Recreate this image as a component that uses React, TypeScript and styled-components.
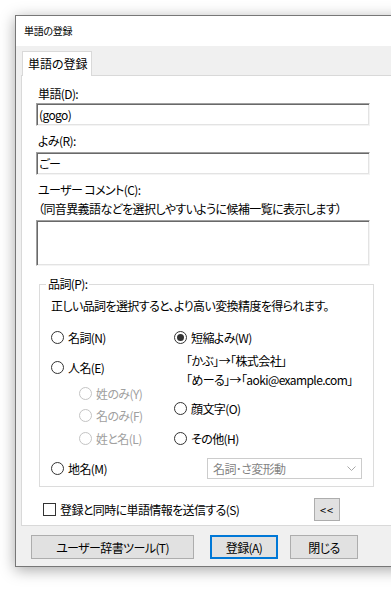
import styled, { createGlobalStyle } from "styled-components"

const GlobalStyle = createGlobalStyle`
  html, body {
    margin: 0;
    padding: 0;
    background: #fff;
    overflow: hidden;
  }
  body {
    font-family: "Noto Sans CJK JP", "Noto Sans", sans-serif;
    font-size: 12px;
    color: #000;
    font-feature-settings: "palt";
    letter-spacing: -0.6px;
  }
  * {
    box-sizing: border-box;
  }
`

const Screen = styled.div`
  width: 391px;
  height: 589px;
  padding: 15px 0 0 15px;
  overflow: hidden;
`

const Window = styled.div`
  width: 400px;
  height: 552px;
  border: 1px solid #777;
  border-right: none;
  background: #f0f0f0;
  box-shadow: 0 3px 14px rgba(0, 0, 0, 0.35);
  display: flex;
  flex-direction: column;
`

const TitleBar = styled.div`
  height: 30px;
  background: #fff;
  padding-left: 8px;
  display: flex;
  align-items: center;
  font-size: 10px;
  line-height: 12px;
  letter-spacing: -0.3px;
`

const Body = styled.div`
  padding-top: 5px;
  display: flex;
  flex-direction: column;
`

const TabStrip = styled.div`
  display: flex;
  padding-left: 6px;
`

const Tab = styled.div`
  position: relative;
  z-index: 1;
  width: 70px;
  height: 25px;
  margin-bottom: -1px;
  padding: 0 5px;
  border: 1px solid #d9d9d9;
  border-bottom: none;
  background: #fff;
  display: flex;
  align-items: center;
  line-height: 16px;
  white-space: nowrap;
  letter-spacing: 0;
`

const TabPage = styled.div`
  height: 451px;
  margin-left: 5px;
  padding: 10px 0 0 14px;
  border: 1px solid #d9d9d9;
  background: #fff;
  display: flex;
  flex-direction: column;
`

const Label = styled.div<{ $mt?: number }>`
  margin-top: ${(p) => p.$mt ?? 0}px;
  padding-left: 2px;
  line-height: 16px;
  white-space: nowrap;
`

const TextBox = styled.div<{ $h?: number; $mt?: number }>`
  width: 334px;
  height: ${(p) => p.$h ?? 23}px;
  margin-top: ${(p) => p.$mt ?? 0}px;
  padding: 2px 2px;
  border: 1px solid;
  border-color: #a0a0a0 #f4f4f4 #f4f4f4 #a0a0a0;
  box-shadow: inset 1px 1px 0 #696969, inset -1px -1px 0 #e3e3e3;
  background: #fff;
  line-height: 17px;
`

const Group = styled.fieldset`
  width: 335px;
  margin: 10px 0 0 3px;
  padding: 5px 11px 7px 11px;
  border: 1px solid #dcdcdc;
  min-width: 0;
`

const Legend = styled.legend`
  margin-left: -5px;
  padding: 0 2px;
  line-height: 16px;
`

const Note = styled.div<{ $mt?: number; $pl?: number }>`
  margin-top: ${(p) => p.$mt ?? 0}px;
  padding-left: ${(p) => p.$pl ?? 0}px;
  line-height: 18px;
  white-space: nowrap;
`

const Columns = styled.div`
  display: flex;
  margin-top: 12px;
`

const Column = styled.div<{ $w?: number }>`
  display: flex;
  flex-direction: column;
  width: ${(p) => (p.$w ? `${p.$w}px` : "auto")};
`

const Option = styled.div<{ $mt?: number; $indent?: number; $disabled?: boolean }>`
  display: flex;
  align-items: center;
  gap: 4px;
  height: 20px;
  margin-top: ${(p) => p.$mt ?? 0}px;
  padding-left: ${(p) => p.$indent ?? 0}px;
  color: ${(p) => (p.$disabled ? "#a0a0a0" : "#000")};
  white-space: nowrap;
`

const RadioMark = styled.span<{ $checked?: boolean; $disabled?: boolean }>`
  position: relative;
  width: 13px;
  height: 13px;
  flex: none;
  border-radius: 50%;
  border: 1px solid ${(p) => (p.$disabled ? "#c4c4c4" : "#333")};
  background: #fff;

  &::after {
    content: "";
    display: ${(p) => (p.$checked ? "block" : "none")};
    position: absolute;
    left: 2px;
    top: 2px;
    width: 7px;
    height: 7px;
    border-radius: 50%;
    background: #333;
  }
`

const Combo = styled.div`
  width: 155px;
  height: 21px;
  margin: 10px 0 0 33px;
  padding: 0 5px 0 5px;
  border: 1px solid #cccccc;
  background: #fff;
  color: #838383;
  display: flex;
  align-items: center;
  justify-content: space-between;
  white-space: nowrap;
`

const CheckRow = styled.div`
  width: 304px;
  height: 23px;
  margin-top: 11px;
  padding-left: 7px;
  display: flex;
  align-items: center;
  gap: 4px;
`

const CheckMark = styled.span`
  width: 13px;
  height: 13px;
  flex: none;
  border: 1px solid #333;
  background: #fff;
`

const SmallButton = styled.div`
  width: 26px;
  height: 23px;
  margin-left: auto;
  border: 1px solid #adadad;
  background: #e1e1e1;
  display: flex;
  align-items: center;
  justify-content: center;
  font-size: 11px;
  letter-spacing: 1px;
`

const ButtonRow = styled.div`
  display: flex;
  margin-top: 9px;
  padding-left: 15px;
`

const Button = styled.div<{ $w: number; $ml?: number; $default?: boolean }>`
  width: ${(p) => p.$w}px;
  height: 24px;
  margin-left: ${(p) => p.$ml ?? 0}px;
  border: ${(p) => (p.$default ? "2px solid #0078d7" : "1px solid #adadad")};
  background: #e1e1e1;
  display: flex;
  align-items: center;
  justify-content: center;
  white-space: nowrap;
`

function Radio({
  label,
  checked,
  disabled,
  mt,
  indent,
}: {
  label: string
  checked?: boolean
  disabled?: boolean
  mt?: number
  indent?: number
}) {
  return (
    <Option $mt={mt} $indent={indent} $disabled={disabled}>
      <RadioMark $checked={checked} $disabled={disabled} />
      <span>{label}</span>
    </Option>
  )
}

export default function App() {
  return (
    <Screen>
      <GlobalStyle />
      <Window>
        <TitleBar>単語の登録</TitleBar>
        <Body>
          <TabStrip>
            <Tab>単語の登録</Tab>
          </TabStrip>
          <TabPage>
            <Label>単語(D):</Label>
            <TextBox $mt={1}>(gogo)</TextBox>
            <Label $mt={7}>よみ(R):</Label>
            <TextBox $mt={3}>ごー</TextBox>
            <Label $mt={7}>ユーザー コメント(C):</Label>
            <Label $mt={3}>（同音異義語などを選択しやすいように候補一覧に表示します）</Label>
            <TextBox $mt={3} $h={46} />

            <Group>
              <Legend>品詞(P):</Legend>
              <Note>正しい品詞を選択すると、より高い変換精度を得られます。</Note>
              <Columns>
                <Column $w={123}>
                  <Radio label="名詞(N)" />
                  <Radio label="人名(E)" mt={10} />
                  <Radio label="姓のみ(Y)" mt={6} indent={28} disabled />
                  <Radio label="名のみ(F)" mt={2} indent={28} disabled />
                  <Radio label="姓と名(L)" mt={3} indent={28} disabled />
                  <Radio label="地名(M)" mt={10} />
                </Column>
                <Column>
                  <Radio label="短縮よみ(W)" checked />
                  <Note $mt={5} $pl={12}>「かぶ」→「株式会社」</Note>
                  <Note $mt={1} $pl={12}>「めーる」→「aoki@example.com」</Note>
                  <Radio label="顔文字(O)" mt={9} />
                  <Radio label="その他(H)" mt={10} />
                  <Combo>
                    <span>名詞･さ変形動</span>
                    <svg width="9" height="5" viewBox="0 0 9 5">
                      <polyline points="0.5,0.5 4.5,4.5 8.5,0.5" fill="none" stroke="#a8a8a8" strokeWidth="1" />
                    </svg>
                  </Combo>
                </Column>
              </Columns>
            </Group>

            <CheckRow>
              <CheckMark />
              <span>登録と同時に単語情報を送信する(S)</span>
              <SmallButton>&lt;&lt;</SmallButton>
            </CheckRow>
          </TabPage>
          <ButtonRow>
            <Button $w={163}>ユーザー辞書ツール(T)</Button>
            <Button $w={68} $ml={16} $default>
              登録(A)
            </Button>
            <Button $w={68} $ml={12}>
              閉じる
            </Button>
          </ButtonRow>
        </Body>
      </Window>
    </Screen>
  )
}
